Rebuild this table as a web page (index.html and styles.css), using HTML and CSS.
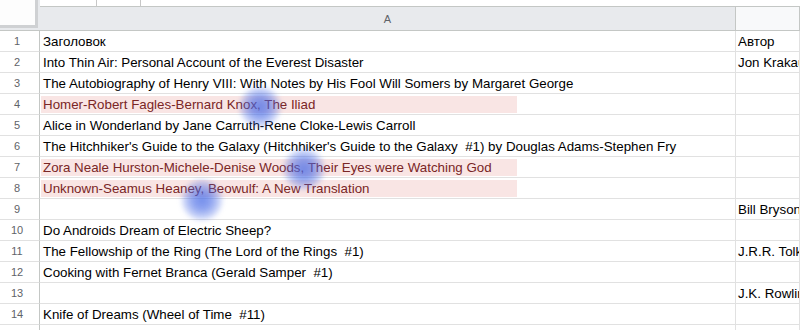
FILE: index.html
```html
<!DOCTYPE html>
<html lang="ru">
<head>
<meta charset="utf-8">
<title>Книги</title>
<link rel="stylesheet" href="styles.css">
</head>
<body>
<div class="sheet">
  <div class="topstrip">
    <div class="strip-seg"></div>
    <div class="strip-seg"></div>
  </div>
  <div class="grid">
    <div class="corner"><div class="corner-box"></div></div>
    <div class="colhead sel">A</div>
    <div class="colhead"></div>

    <div class="rn">1</div><div class="c">Заголовок</div><div class="c b">Автор</div>
    <div class="rn">2</div><div class="c">Into Thin Air: Personal Account of the Everest Disaster</div><div class="c b">Jon Krakauer</div>
    <div class="rn">3</div><div class="c">The Autobiography of Henry VIII: With Notes by His Fool Will Somers by Margaret George</div><div class="c b"></div>
    <div class="rn">4</div><div class="c"><div class="mark">Homer-Robert Fagles-Bernard Knox, The Iliad</div></div><div class="c b"></div>
    <div class="rn">5</div><div class="c">Alice in Wonderland by Jane Carruth-Rene Cloke-Lewis Carroll</div><div class="c b"></div>
    <div class="rn">6</div><div class="c">The Hitchhiker's Guide to the Galaxy (Hitchhiker's Guide to the Galaxy  #1) by Douglas Adams-Stephen Fry</div><div class="c b"></div>
    <div class="rn">7</div><div class="c"><div class="mark">Zora Neale Hurston-Michele-Denise Woods, Their Eyes were Watching God</div></div><div class="c b"></div>
    <div class="rn">8</div><div class="c"><div class="mark">Unknown-Seamus Heaney, Beowulf: A New Translation</div></div><div class="c b"></div>
    <div class="rn">9</div><div class="c"></div><div class="c b">Bill Bryson</div>
    <div class="rn">10</div><div class="c">Do Androids Dream of Electric Sheep?</div><div class="c b"></div>
    <div class="rn">11</div><div class="c">The Fellowship of the Ring (The Lord of the Rings  #1)</div><div class="c b">J.R.R. Tolkien</div>
    <div class="rn">12</div><div class="c">Cooking with Fernet Branca (Gerald Samper  #1)</div><div class="c b"></div>
    <div class="rn">13</div><div class="c"></div><div class="c b">J.K. Rowling</div>
    <div class="rn">14</div><div class="c">Knife of Dreams (Wheel of Time  #11)</div><div class="c b"></div>
    <div class="rn">15</div><div class="c"></div><div class="c b"></div>
  </div>

  <!-- touch points drawn over the grid -->
  <div class="touch t1"></div>
  <div class="touch t2"></div>
  <div class="touch t3"></div>
</div>
</body>
</html>
```

FILE: styles.css
```css
* { box-sizing: border-box; }

html, body {
  margin: 0;
  padding: 0;
  background: #fff;
  overflow: hidden;
}

.sheet {
  position: relative;
  width: 800px;
  height: 330px;
  overflow: hidden;
  font-family: "Liberation Sans", Arial, sans-serif;
  font-size: 13.33px;
  color: #000;
}

/* strip left over from the formula bar above the grid */
.topstrip {
  display: flex;
  height: 6px;
  padding-left: 96px;
}
.strip-seg {
  width: 44px;
  height: 6px;
  border-left: 1px solid #c7c7c7;
}

.grid {
  display: grid;
  grid-template-columns: 40px 696px 1fr;
  grid-template-rows: 25px;
  grid-auto-rows: 21px;
}

.corner {
  align-self: start;
  height: 31px;
  margin-top: -6px;
  background: #e8eaed;
  border-bottom: 1px solid #c4c7c5;
}
.corner-box {
  width: 38px;
  height: 28px;
  background: #fdfdfd;
  border-right: 3px solid #cfd1d3;
  border-bottom: 3px solid #cfd1d3;
}

.colhead {
  align-self: start;
  height: 25px;
  border-top: 1px solid #c4c7c5;
  border-bottom: 1px solid #c4c7c5;
  border-right: 1px solid #c4c7c5;
  background: #f8f9fa;
  color: #5f6368;
  font-size: 11px;
  display: flex;
  align-items: center;
  justify-content: center;
}
.colhead.sel { background: #e8eaed; }

.rn {
  border-right: 1px solid #c4c7c5;
  border-bottom: 1px solid #e1e1e1;
  color: #5f6368;
  font-size: 11px;
  display: flex;
  align-items: center;
  justify-content: center;
  padding-right: 5px;
  background: #fff;
}

.c {
  border-right: 1px solid #e1e1e1;
  border-bottom: 1px solid #e1e1e1;
  padding-left: 3px;
  white-space: pre;
  overflow: hidden;
  display: flex;
  align-items: center;
}
.c.b { padding-left: 2px; }

.mark {
  width: 476px;
  height: 17px;
  margin-left: -2px;
  padding-left: 2px;
  background: #f9e5e4;
  color: #7a2626;
  display: flex;
  align-items: center;
}

.touch {
  position: absolute;
  width: 44px;
  height: 44px;
  border-radius: 50%;
  background: radial-gradient(circle, rgba(70, 105, 230, 0.75) 0%, rgba(70, 105, 230, 0.6) 30%, rgba(70, 105, 230, 0.3) 55%, rgba(70, 105, 230, 0) 72%);
  filter: blur(2px);
}
.t1 { left: 238px; top: 85px; }
.t2 { left: 282px; top: 147px; }
.t3 { left: 180px; top: 178px; }
```
